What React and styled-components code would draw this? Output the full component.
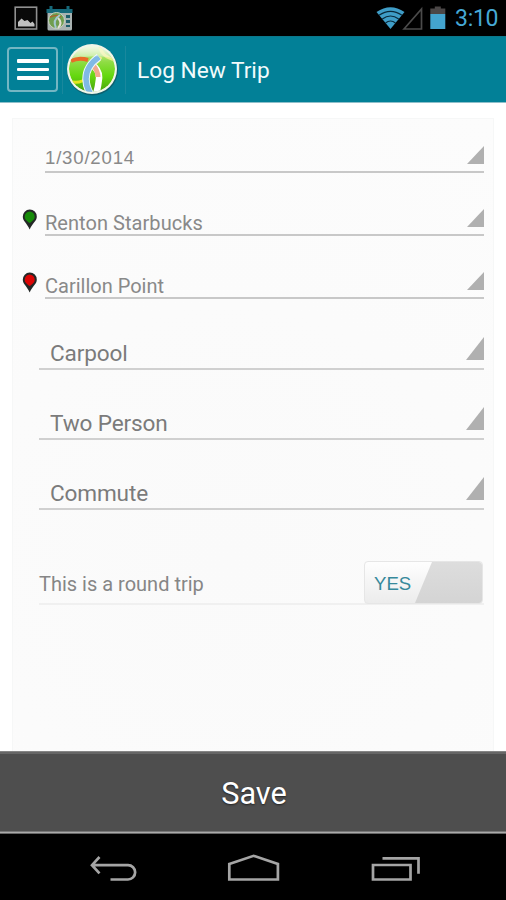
/*
 * LogTrip - screen used to log a new commute trip
 *
 * - Android status bar
 * - Action bar with menu button and logo
 * - Form card (date, from, to, mode, people, purpose, round trip)
 * - Save button and system navigation
 */

import React from 'react';
import styled, { createGlobalStyle } from 'styled-components';

const GlobalStyle = createGlobalStyle`
  * {
    box-sizing: border-box;
  }

  body {
    margin: 0;
    background: #fff;
    font-family: Roboto, "Liberation Sans", sans-serif;
  }
`;

const Screen = styled.div`
  display: flex;
  flex-direction: column;
  width: 506px;
  height: 900px;
  overflow: hidden;
  background: #fff;
`;

const StatusBar = styled.div`
  display: flex;
  flex: none;
  justify-content: space-between;
  height: 36px;
  background: #000;
`;

const Clock = styled.span`
  width: 51px;
  line-height: 38px;
  font-size: 23px;
  letter-spacing: -0.3px;
  color: #46a9d6;
`;

const StatusGroup = styled.div`
  display: flex;
`;

const ActionBar = styled.header`
  display: flex;
  flex: none;
  align-items: center;
  height: 67px;
  padding-left: 7px;
  background: #028097;
  border-top: 1px solid #0b778b;
  border-bottom: 1px solid #8ebfca;
`;

const MenuButton = styled.button`
  display: flex;
  flex-direction: column;
  align-items: center;
  justify-content: center;
  gap: 5px;
  width: 51px;
  height: 45px;
  padding: 0;
  background: transparent;
  border: 2px solid #74b6c3;
  border-radius: 4px;
`;

const MenuLine = styled.span`
  width: 32px;
  height: 3.5px;
  border-radius: 1px;
  background: #fff;
`;

const Divider = styled.span`
  width: 1px;
  height: 48px;
  margin-left: ${({ $space }) => $space}px;
  background: #19889d;
`;

const LogoArt = styled.svg`
  flex: none;
  width: 54px;
  height: 54px;
  margin-left: 2px;
`;

const Title = styled.h1`
  margin: 2px 0 0 11px;
  font-size: 22.7px;
  font-weight: 400;
  line-height: 30px;
  color: #f2fbfc;
`;

const Content = styled.main`
  display: flex;
  flex: 1;
  padding: 15px 12px 0;
`;

const Card = styled.form`
  flex: 1;
  padding: 0 9px 0 8px;
  background: radial-gradient(circle at 45% 70%, #fafafa 0%, #fcfcfc 100%);
  border: 1px solid #f6f7f7;
  border-bottom: 0;
`;

const Field = styled.div`
  display: flex;
  align-items: flex-end;
  height: ${({ $height }) => $height}px;
`;

const PinSlot = styled.div`
  flex: none;
  width: 24px;
  height: 27px;
`;

const PinArt = styled.svg`
  display: block;
  width: 16px;
  height: 22px;
  margin-left: 1px;
`;

const Spinner = styled.div`
  display: flex;
  flex: 1;
  align-items: flex-end;
  justify-content: space-between;
  margin-left: ${({ $large }) => ($large ? 18 : 0)}px;
  padding-left: ${({ $large }) => ($large ? 11 : 0)}px;
  padding-bottom: ${({ $large }) => ($large ? 8 : 7)}px;
  border-bottom: 2px solid ${({ $large }) => ($large ? '#d0d0d0' : '#c8c8c8')};
`;

const Value = styled.span`
  margin-bottom: ${({ $drop }) => -$drop}px;
  font-size: ${({ $size }) => $size}px;
  line-height: 26px;
  letter-spacing: ${({ $track }) => $track}px;
  font-family: ${({ $wide }) => ($wide ? '"Liberation Sans", Arial' : 'Roboto')}, sans-serif;
  color: ${({ $color }) => $color};
`;

const Corner = styled.span`
  width: ${({ $large }) => ($large ? 18 : 17)}px;
  height: ${({ $large }) => ($large ? 23 : 18)}px;
  background: #b0b0b0;
  clip-path: polygon(100% 0, 100% 100%, 0 100%);
`;

const RoundTrip = styled.div`
  display: flex;
  align-items: center;
  justify-content: space-between;
  height: 45px;
  margin: 50px 0 0 18px;
  border-bottom: 2px solid #f0f0f0;
`;

const RoundTripLabel = styled.span`
  padding-top: 4px;
  font-size: 20px;
  color: #868686;
`;

const Toggle = styled.div`
  display: flex;
  width: 119px;
  height: 43px;
  margin: 2px 1px 0 0;
  border: 1px solid #e6e6e6;
  border-radius: 4px;
  overflow: hidden;
  background: linear-gradient(#fefefe, #ececec);
`;

const ToggleText = styled.span`
  width: 50px;
  padding-left: 9px;
  font-size: 18.6px;
  line-height: 43px;
  font-family: "Liberation Sans", Arial, sans-serif;
  color: #36899b;
`;

const ToggleThumb = styled.span`
  flex: 1;
  background: linear-gradient(#dddddd, #d4d4d4);
  border-radius: 0 3px 3px 0;
  clip-path: polygon(17px 0, 100% 0, 100% 100%, 0 100%);
`;

const SaveButton = styled.button`
  flex: none;
  height: 83px;
  padding: 2px 0 0 2px;
  border: 0;
  background: linear-gradient(#858585 0 1px, #666 1px 3px, #4e4e4e 3px 80px, #777 80px 81px, #aaa 81px 82px, #666 82px);
  font-family: Roboto, sans-serif;
  font-size: 30.7px;
  color: #fff;
  text-shadow: 0 1px 2px #222;
`;

const NavBar = styled.nav`
  display: flex;
  flex: none;
  height: 66px;
  background: #000;
`;

const Notifications = () => (
  <svg width="80" height="36" viewBox="0 0 80 36">
    <rect x="15.2" y="7.2" width="21.4" height="21.8" fill="#090909" stroke="#909090" strokeWidth="1.6" />
    <path d="M18 26.5V22l3.5-3.5 3 2.5 3-1 3 3 2-1.5 2 2.5v2.5z" fill="#c0c0c0" />
    <rect x="47.5" y="10" width="24.5" height="20.5" rx="1.5" fill="#a9b2b1" />
    <path d="M46.5 13V9h3V6h3v3h14V6h3v3h3v4z" fill="#16697a" />
    <circle cx="56.5" cy="20.5" r="8" fill="#6f9d4f" stroke="#cbd4c3" strokeWidth="1" />
    <path d="M50 17q8-3 11 0" fill="none" stroke="#a9642d" strokeWidth="1.5" />
    <path d="M60 15q-8 5-4 13" fill="none" stroke="#a4c8d2" strokeWidth="2" />
    <path d="M58 18q5 5 0 10" fill="none" stroke="#e2ded5" strokeWidth="2" />
    <path d="M66 15h4v3h-4zm0 5h4v3h-4zm0 5h4v2h-4z" fill="#1e5d6a" />
  </svg>
);

const Signals = () => (
  <svg width="80" height="36" viewBox="375 0 80 36">
    <path d="M376.5 12Q390.5 2.5 404.5 12L390.5 29z" fill="#3f9dc7" />
    <g fill="none" stroke="#09293a" strokeWidth="1.2">
      <path d="M379 15.3q11.5-8 23 0" />
      <path d="M382.3 19q8.2-6 16.4 0" />
      <path d="M385.5 23q5-4 10 0" />
    </g>
    <path d="M404 29l17.5-20v20z" fill="none" stroke="#4b4b4b" strokeWidth="1.7" />
    <path d="M430.3 14V8.5h4.5V6.5h6v2h4.5V14z" fill="#4b4747" />
    <path d="M430.3 14h15v15h-15z" fill="#43a4cf" />
  </svg>
);

const Logo = () => (
  <LogoArt viewBox="65 42 54 54">
    <defs>
      <linearGradient id="grass" x1="0" y1="0" x2="0" y2="1">
        <stop offset="0" stopColor="#d9eeb0" />
        <stop offset="0.35" stopColor="#8fdc44" />
        <stop offset="0.65" stopColor="#65d80f" />
        <stop offset="1" stopColor="#4aa30d" />
      </linearGradient>
      <linearGradient id="gloss" x1="0" y1="0" x2="0" y2="1">
        <stop offset="0" stopColor="#fff" stopOpacity="0.75" />
        <stop offset="1" stopColor="#fff" stopOpacity="0.3" />
      </linearGradient>
      <clipPath id="disc">
        <circle cx="92" cy="68" r="23" />
      </clipPath>
    </defs>
    <circle cx="92.5" cy="69" r="25.5" fill="#12515d" opacity="0.7" />
    <circle cx="92" cy="68" r="25" fill="#f1f6e9" />
    <g clipPath="url(#disc)" fill="none">
      <circle cx="92" cy="68" r="23" fill="url(#grass)" />
      <path d="M68 80q12 4 20-4" stroke="#e2e51f" strokeWidth="3" />
      <path d="M99 43q2 14 18 16M101 56q-2 4-5 6" stroke="#e9ee8b" strokeWidth="3" />
      <path d="M91 63q9 6 8 15t-3 15" stroke="#fff" strokeWidth="6.5" />
      <path d="M93 64q5 6 5 12" stroke="#f0aa8d" strokeWidth="5" />
      <path d="M99 56q-13 9-13 22 0 8 5 16" stroke="#eff7fb" strokeWidth="7.5" />
      <path d="M99 56q-13 9-13 22 0 8 5 16" stroke="#80b9e5" strokeWidth="5.5" />
      <path d="M67 42h50v16q-24-6-50 1z" fill="url(#gloss)" />
      <path d="M71 60q8-4 17-1" stroke="#e96b28" strokeWidth="4" />
    </g>
  </LogoArt>
);

const Pin = ({ color }) => (
  <PinArt viewBox="0 0 16 22">
    <path d="M7.7.5A7 7 0 0 0 .8 7.7C.8 12 5 14 7.7 20.5 10.4 14 14.8 12 14.8 7.7A7 7 0 0 0 7.7.5z" fill="#242827" />
    <path d="M7.7 2.5a5 5.2 0 0 0-5 5.2c0 3 2.6 4.5 5 6.3 2.4-1.8 5-3.3 5-6.3a5 5.2 0 0 0-5-5.2z" fill={color} />
  </PinArt>
);

const NavIcons = () => (
  <svg width="506" height="66" viewBox="0 834 506 66" fill="none" stroke="#a5a5a5" strokeWidth="2.7">
    <path d="M99.5 857L92 865.2l7.5 8.2M92 865.2h36a7 7 0 0 1 0 14.3h-17.5" />
    <path d="M229.3 864l24.3-8.2 24.3 8.2v15.5h-48.6z" />
    <path d="M373 865h37.5v14.5H373zM382.5 858.3h36v15.5" />
  </svg>
);

const places = [
  { text: '1/30/2014', height: 54, size: 18.6, track: 0.8, drop: 7, wide: true },
  { text: 'Renton Starbucks', height: 63, size: 20, track: 0.05, drop: 9, pin: '#168b09' },
  { text: 'Carillon Point', height: 63, size: 20, track: 0, drop: 9, pin: '#dc0505' },
];

const options = [
  { text: 'Carpool', height: 71 },
  { text: 'Two Person', height: 70 },
  { text: 'Commute', height: 70 },
];

const App = () => {
  return (
    <Screen>
      <GlobalStyle />
      <StatusBar>
        <Notifications />
        <StatusGroup>
          <Signals />
          <Clock>3:10</Clock>
        </StatusGroup>
      </StatusBar>
      <ActionBar>
        <MenuButton type="button" aria-label="Menu">
          <MenuLine />
          <MenuLine />
          <MenuLine />
        </MenuButton>
        <Divider $space={4} />
        <Logo />
        <Divider $space={6} />
        <Title>Log New Trip</Title>
      </ActionBar>
      <Content>
        <Card>
          {places.map((place) => (
            <Field key={place.text} $height={place.height}>
              <PinSlot>{place.pin && <Pin color={place.pin} />}</PinSlot>
              <Spinner>
                <Value $size={place.size} $track={place.track} $drop={place.drop} $wide={place.wide} $color="#898989">
                  {place.text}
                </Value>
                <Corner />
              </Spinner>
            </Field>
          ))}
          {options.map((option) => (
            <Field key={option.text} $height={option.height}>
              <Spinner $large>
                <Value $size={22.6} $track={-0.15} $drop={7} $color="#7b7b7b">
                  {option.text}
                </Value>
                <Corner $large />
              </Spinner>
            </Field>
          ))}
          <RoundTrip>
            <RoundTripLabel>This is a round trip</RoundTripLabel>
            <Toggle>
              <ToggleText>YES</ToggleText>
              <ToggleThumb />
            </Toggle>
          </RoundTrip>
        </Card>
      </Content>
      <SaveButton type="button">Save</SaveButton>
      <NavBar>
        <NavIcons />
      </NavBar>
    </Screen>
  );
};

export default App;
